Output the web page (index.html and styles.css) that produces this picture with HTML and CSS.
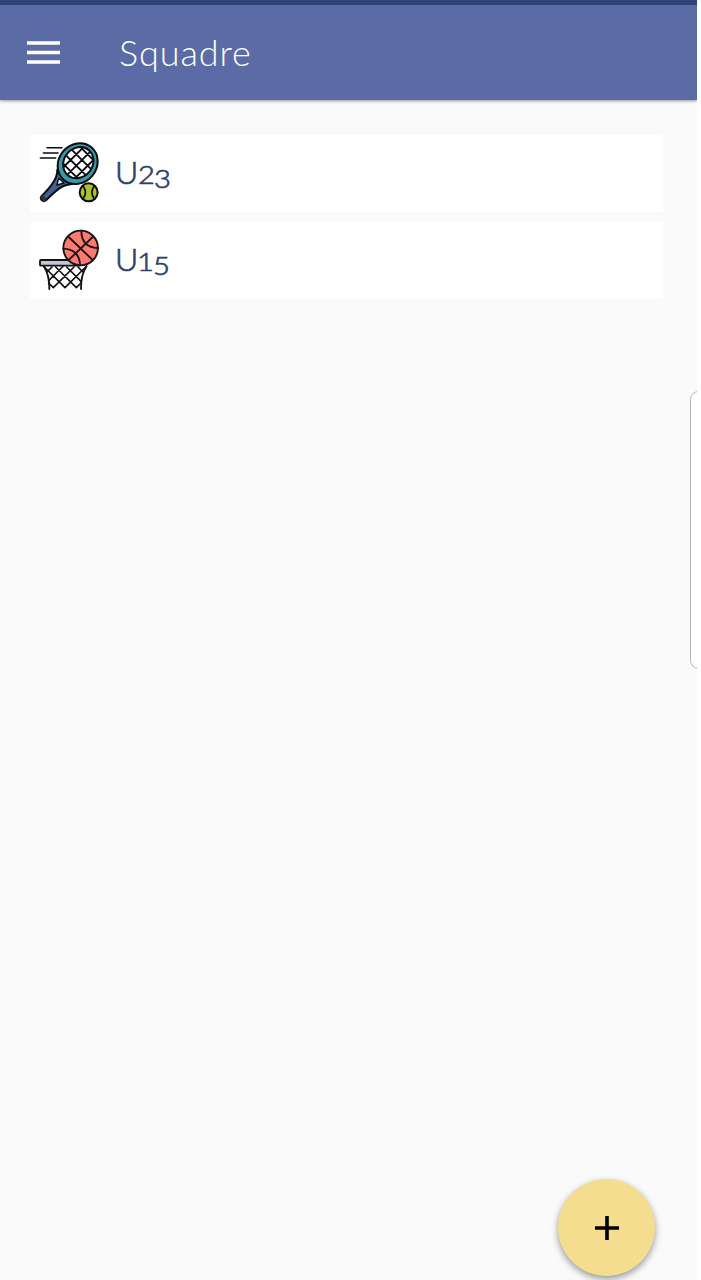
FILE: index.html
```html
<!DOCTYPE html>
<html lang="it">
<head>
    <meta charset="UTF-8">
    <meta name="viewport" content="width=device-width, initial-scale=1.0">
    <title>Squadre</title>
    <link rel="stylesheet" href="styles.css">
</head>
<body>
    <div class="screen">
        <header class="toolbar">
            <svg class="menu-icon" viewBox="0 0 33 24">
                <path d="M0 2h33M0 11.5h33M0 21h33" stroke="#fff" stroke-width="3.6"/>
            </svg>
            <h1>Squadre</h1>
        </header>

        <ul class="teams">
            <li class="team">
                <svg class="team-icon" viewBox="45 45 180 180" fill="none" stroke="#0b0b0f" stroke-width="6" stroke-linecap="round" stroke-linejoin="round">
                    <defs>
                        <clipPath id="strings"><ellipse cx="163" cy="104" rx="49" ry="43" transform="rotate(-50 163 104)"/></clipPath>
                    </defs>
                    <path d="M69 59h45M58 75h44M49 90h46" stroke-width="4.5"/>
                    <path d="M100 125C100 150 85 172 52 205Q48 211 54 217Q60 222 66 217C98 184 115 170 145 168L123 157Z" fill="#42618f"/>
                    <path d="M104 151L99 171L120 165Z" fill="#fff" stroke-width="4"/>
                    <path d="M55 208L61 214" stroke="#30333c" stroke-width="12"/>
                    <ellipse cx="161" cy="107" rx="64" ry="57" fill="#349bad" transform="rotate(-50 161 107)"/>
                    <ellipse cx="163" cy="104" rx="49" ry="43" fill="#fff" transform="rotate(-50 163 104)"/>
                    <g clip-path="url(#strings)">
                        <path d="M80 122L160 42M97 139L182 54M114 156L199 71M131 173L216 88M95 85L178 168M112 68L195 151M129 51L212 134M146 34L231 119" stroke-width="5.5"/>
                    </g>
                    <circle cx="194" cy="193" r="27" fill="#adc32c"/>
                    <path d="M177 174Q192 193 177 212M211 174Q196 193 211 212" stroke-width="5"/>
                </svg>
                <span class="team-name">U<span class="digit">2</span><span class="digit low">3</span></span>
            </li>
            <li class="team">
                <svg class="team-icon" viewBox="45 45 180 180" fill="none" stroke="#171314" stroke-width="5.5" stroke-linecap="round" stroke-linejoin="round">
                    <path d="M59 153Q77 180 76 222M188 153Q170 180 171 222"/>
                    <path d="M61 156L123 218L185 156M74 204L88 218L150 156M95 156L157 218L171 204M128 156L172 200M162 156L176 170M118 153L74 197M84 156L70 170" stroke-width="5"/>
                    <rect x="48" y="135" width="120" height="17" rx="3" fill="#c3c7d5"/>
                    <circle cx="170" cy="99" r="52" fill="#fb7b70"/>
                    <path d="M134 66L206 135M134 135L206 66M172 47Q172 96 221 99M118 101Q166 103 168 150"/>
                </svg>
                <span class="team-name">U<span class="digit one">1</span><span class="digit low">5</span></span>
            </li>
        </ul>

        <div class="edge-panel"></div>
        <button class="add-button" aria-label="Aggiungi">
            <svg viewBox="0 0 26 26"><path d="M13 1v24M1 13h24" stroke="#000" stroke-width="3.6"/></svg>
        </button>
    </div>
</body>
</html>
```

FILE: styles.css
```css
* {
    box-sizing: border-box;
}
body {
    margin: 0;
    background-color: #fff;
    font-family: Lato, sans-serif;
}
.screen {
    position: relative;
    width: 697px;
    height: 1280px;
    overflow: hidden;
    background-color: #fafafa;
}
.toolbar {
    display: flex;
    align-items: center;
    height: 100px;
    padding-left: 27px;
    border-top: 5px solid #2f4275;
    background-color: #5a6ba5;
    box-shadow: 0 1px 3px rgba(50, 50, 90, 0.5);
}
.menu-icon {
    width: 33px;
    height: 24px;
}
h1 {
    margin: 0 0 2px 59px;
    color: #fff;
    font-size: 36px;
    font-weight: 300;
    letter-spacing: 0.9px;
}
.teams {
    display: flex;
    flex-direction: column;
    gap: 10px;
    margin: 0;
    padding: 35px 34px 0 30px;
    list-style: none;
}
.team {
    display: flex;
    align-items: center;
    height: 77px;
    padding: 0 9px;
    background-color: #fff;
}
.team-icon {
    width: 60px;
    height: 60px;
    margin-bottom: 1px;
    overflow: visible;
}
.team-name {
    margin: 0 0 3px 16px;
    color: #2f3f6b;
    font-size: 32px;
    font-weight: 300;
    line-height: 38px;
    -webkit-text-stroke: 0.7px #2f3f6b;
}
.digit {
    display: inline-block;
    margin-left: 1px;
    font-size: 26px;
    line-height: 26px;
    transform: scaleX(1.12);
}
.low {
    margin-left: 1px;
    vertical-align: -4px;
}
.one {
    margin-left: 0;
}
/* handle of the side panel, cut by the right edge */
.edge-panel {
    position: absolute;
    top: 391px;
    right: -10px;
    width: 17px;
    height: 278px;
    border: 1px solid #b5b5b5;
    border-radius: 10px;
    background-color: #fff;
}
.add-button {
    position: absolute;
    right: 42px;
    bottom: 4px;
    display: flex;
    align-items: center;
    justify-content: center;
    width: 97px;
    height: 97px;
    padding: 0;
    border: none;
    border-radius: 50%;
    background-color: #f4dd8e;
    box-shadow: 0 3px 7px rgba(0, 0, 0, 0.4);
}
.add-button svg {
    width: 26px;
    height: 26px;
}
```
